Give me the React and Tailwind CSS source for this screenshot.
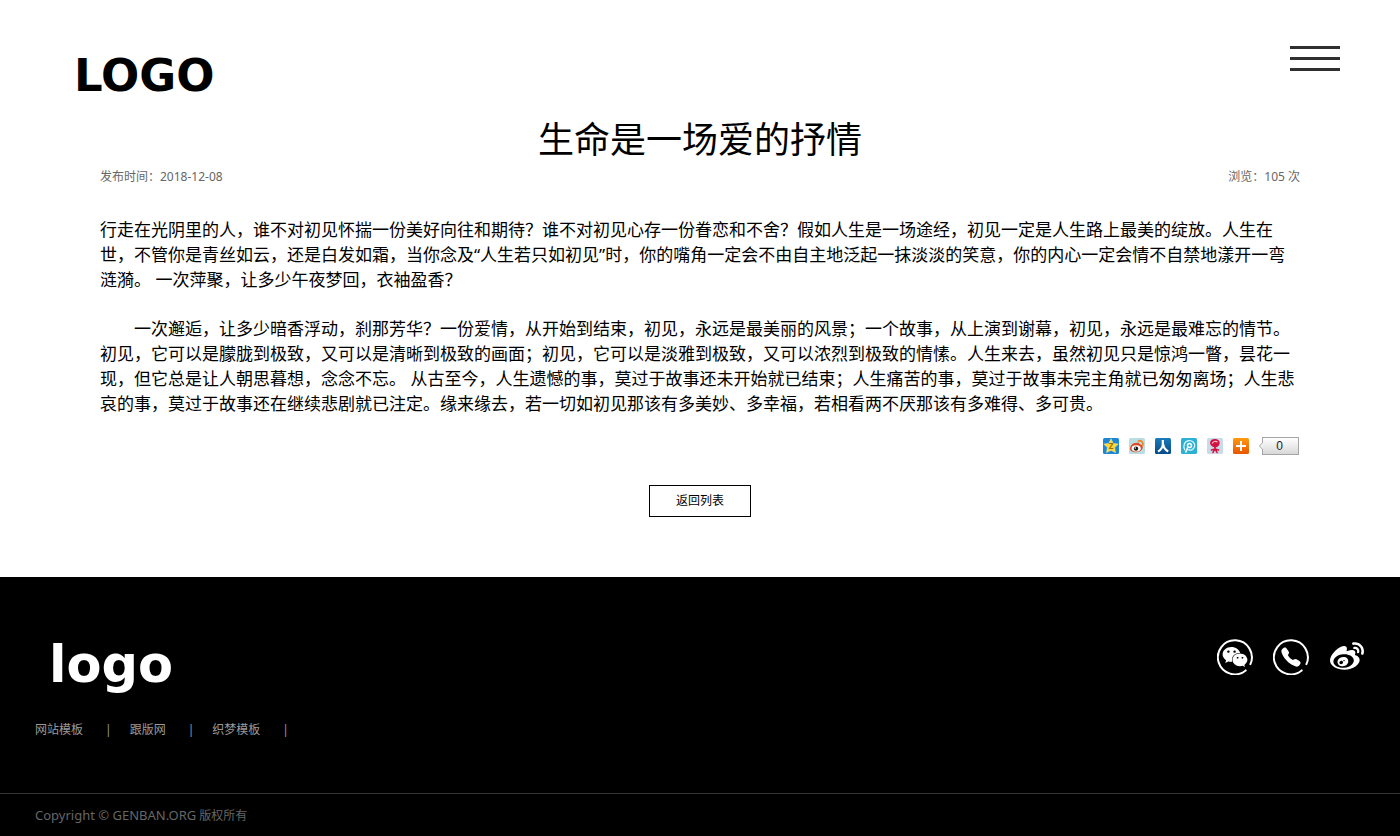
import { FaWeibo, FaWeixin } from 'react-icons/fa';
import { IoCall } from 'react-icons/io5';

const paragraphs = [
  '行走在光阴里的人，谁不对初见怀揣一份美好向往和期待？谁不对初见心存一份眷恋和不舍？假如人生是一场途经，初见一定是人生路上最美的绽放。人生在世，不管你是青丝如云，还是白发如霜，当你念及“人生若只如初见”时，你的嘴角一定会不由自主地泛起一抹淡淡的笑意，你的内心一定会情不自禁地漾开一弯涟漪。 一次萍聚，让多少午夜梦回，衣袖盈香？',
  '一次邂逅，让多少暗香浮动，刹那芳华？一份爱情，从开始到结束，初见，永远是最美丽的风景；一个故事，从上演到谢幕，初见，永远是最难忘的情节。初见，它可以是朦胧到极致，又可以是清晰到极致的画面；初见，它可以是淡雅到极致，又可以浓烈到极致的情愫。人生来去，虽然初见只是惊鸿一瞥，昙花一现，但它总是让人朝思暮想，念念不忘。 从古至今，人生遗憾的事，莫过于故事还未开始就已结束；人生痛苦的事，莫过于故事未完主角就已匆匆离场；人生悲哀的事，莫过于故事还在继续悲剧就已注定。缘来缘去，若一切如初见那该有多美妙、多幸福，若相看两不厌那该有多难得、多可贵。',
];

const footerLinks = ['网站模板', '跟版网', '织梦模板'];

function QzoneIcon() {
  return (
    <svg viewBox="0 0 16 16" className="size-4">
      <rect width="16" height="16" rx="1.5" fill="#1d87d6" />
      <path d="M8 .8l2.2 4.6 5 .7-3.6 3.5.9 5L8 12.3l-4.5 2.3.9-5L.8 6.1l5-.7z" fill="#fdd835" stroke="#fff2a0" strokeWidth=".5" />
      <text x="8" y="11" textAnchor="middle" fontSize="8" fontWeight="700" fill="#9a6b13">Z</text>
    </svg>
  );
}

function SinaIcon() {
  return (
    <svg viewBox="0 0 16 16" className="size-4">
      <rect width="16" height="16" rx="1.5" fill="#b9dde3" />
      <path d="M1 10.5C1.3 7 5 4 7 5.200c1-.5 3.500-.8 3.600.8 2.500.6 3.600 2.200 3 4.200C12.800 13 9.500 14.500 6.500 14.300 3 14 .9 12.700 1 10.500z" fill="#dc4a25" />
      <ellipse cx="7.2" cy="10.4" rx="4.6" ry="3.1" fill="#fff" />
      <circle cx="7" cy="10.6" r="2.2" fill="#161616" />
      <circle cx="6.3" cy="10" r=".7" fill="#fff" />
      <path d="M9.500 3c2.600-.9 5 1.200 4.400 4" fill="none" stroke="#f0862b" strokeWidth="1.8" strokeLinecap="round" />
    </svg>
  );
}

function RenrenIcon() {
  return (
    <svg viewBox="0 0 16 16" className="size-4">
      <defs>
        <linearGradient id="renren" x2="0" y2="1">
          <stop stopColor="#1b7bbb" />
          <stop offset="1" stopColor="#044a86" />
        </linearGradient>
      </defs>
      <rect width="16" height="16" rx="1.5" fill="url(#renren)" />
      <path d="M7.8 2v4.500C7.500 9.500 5.800 12 3 13.600M8.200 6.500c.5 3 2.200 5.500 5 7" fill="none" stroke="#fff" strokeWidth="2.2" />
    </svg>
  );
}

function PengyouIcon() {
  return (
    <svg viewBox="0 0 16 16" className="size-4">
      <rect width="16" height="16" rx="1.5" fill="#2bb2d3" />
      <path d="M3.800 12.200C1.500 8 3.500 2.800 8.300 2.700c3.500 0 5.600 2.300 5.400 5.200-.3 3.500-3.800 5-6.400 3.700" fill="none" stroke="#d8f6fc" strokeWidth="1.3" />
      <path d="M4.500 14.500c1.200-2 1.700-3.300 2.200-5" fill="none" stroke="#fff" strokeWidth="1.6" />
      <circle cx="8.500" cy="7.400" r="2" fill="none" stroke="#fff" strokeWidth="1.5" />
    </svg>
  );
}

function KaixinIcon() {
  return (
    <svg viewBox="0 0 16 16" className="size-4">
      <rect width="16" height="16" rx="1.5" fill="#c9dbe8" />
      <path d="M3 4.500C3.500 1.200 7 .4 9.800 1.200c3 .9 3.600 4 2 6.300-1.500 2.200-4.800 2.500-6.800.8C3.800 7.300 2.900 6 3 4.500z" fill="#d5123f" />
      <path d="M5.200 5.500c1-2 3.500-2.700 5.300-1.500" fill="none" stroke="#f7c3cf" strokeWidth="1.1" />
      <path d="M8 9v3M8 11l-3.500 1M8 11l3.500 1M7.500 11.500L6 14.500M8.500 11.500l1.500 3" fill="none" stroke="#d5123f" strokeWidth="1.6" strokeLinecap="round" />
    </svg>
  );
}

function MoreIcon() {
  return (
    <svg viewBox="0 0 16 16" className="size-4">
      <defs>
        <linearGradient id="more" x2="0" y2="1">
          <stop stopColor="#ff9a10" />
          <stop offset="1" stopColor="#ea5500" />
        </linearGradient>
      </defs>
      <rect width="16" height="16" rx="1.5" fill="url(#more)" />
      <path d="M8 3v10M3 8h10" stroke="#fff" strokeWidth="2" />
    </svg>
  );
}

const shares = [
  { name: 'QQ空间', Icon: QzoneIcon },
  { name: '新浪微博', Icon: SinaIcon },
  { name: '人人网', Icon: RenrenIcon },
  { name: '朋友网', Icon: PengyouIcon },
  { name: '开心网', Icon: KaixinIcon },
  { name: '更多', Icon: MoreIcon },
];

// ring with a small opening at the lower right
function Ring({ children }) {
  return (
    <span className="relative flex size-9 items-center justify-center">
      <svg viewBox="0 0 36 36" className="absolute inset-0 size-9">
        <path d="M28.700 31.400A17 17 0 1 1 33.400 25.200" fill="none" stroke="currentColor" strokeWidth="2" strokeLinecap="round" />
      </svg>
      {children}
    </span>
  );
}

function Header() {
  return (
    <header className="flex h-[120px] items-start justify-between pr-[60px] pl-[74px]">
      <a href="#" className="mt-[52px] font-['DejaVu_Sans'] text-[45px] leading-[48px] font-bold">LOGO</a>
      <button type="button" aria-label="菜单" className="mt-[46px] flex w-[50px] flex-col gap-2">
        <span className="h-[3px] bg-[#2f2f2f]" />
        <span className="h-[3px] bg-[#2f2f2f]" />
        <span className="h-[3px] bg-[#2f2f2f]" />
      </button>
    </header>
  );
}

function ShareBar() {
  return (
    <div className="mt-5 flex h-5 items-center justify-end">
      <div className="flex gap-[10px]">
        {shares.map(({ name, Icon }) => (
          <a key={name} href="#" aria-label={name}>
            <Icon />
          </a>
        ))}
      </div>
      <a
        href="#"
        className="relative mr-px ml-[13px] flex h-[18px] w-[37px] items-center justify-center border border-[#a5a5a5] bg-linear-to-b from-white to-[#d8d8d8] pr-0.5 font-['Liberation_Sans'] text-xs text-[#222]"
      >
        <svg viewBox="0 0 4 8" className="absolute top-1 -left-1 h-2 w-1">
          <path d="M4 0L.5 4 4 8" fill="#f2f2f2" stroke="#a5a5a5" />
        </svg>
        0
      </a>
    </div>
  );
}

function Footer() {
  return (
    <footer className="bg-black">
      <div className="flex h-[216px] items-start justify-between px-[35px]">
        <div>
          <a href="#" className="mt-[60px] ml-[14px] block font-['DejaVu_Sans'] text-[51px] leading-[56px] font-bold text-white">logo</a>
          <ul className="mt-[27px] flex text-xs leading-5 text-[#999]">
            {footerLinks.map((name) => (
              <li key={name} className="flex">
                <a href="#">{name}</a>
                <span className="mr-[18px] ml-[22px]">|</span>
              </li>
            ))}
          </ul>
        </div>
        <div className="mt-[62px] flex gap-5 text-white">
          <a href="#" aria-label="微信">
            <Ring><FaWeixin className="size-[26px]" /></Ring>
          </a>
          <a href="#" aria-label="电话">
            <Ring><IoCall className="size-[22px]" /></Ring>
          </a>
          <a href="#" aria-label="微博" className="flex size-9 items-center justify-center">
            <FaWeibo className="size-[34px]" />
          </a>
        </div>
      </div>
      <p className="border-t border-[#333] px-[35px] py-[11px] text-xs leading-5 text-[#666]">
        <span className="text-[13px]">Copyright © GENBAN.ORG</span> 版权所有
      </p>
    </footer>
  );
}

export default function App() {
  return (
    <div className="flex min-h-screen flex-col bg-black font-['Noto_Sans','Noto_Sans_CJK_SC',sans-serif] text-black">
      <div className="bg-white">
        <Header />
        <main className="mx-auto max-w-[1200px] pb-[60px]">
          <h1 className="text-center text-4xl leading-10">生命是一场爱的抒情</h1>
          <div className="mt-[7px] flex justify-between text-xs leading-5 text-[#666]">
            <span>发布时间：2018-12-08</span>
            <span>浏览：105 次</span>
          </div>
          <article className="mt-[30px] text-[17px] leading-[25px]">
            <p>{paragraphs[0]}</p>
            <p className="mt-6 indent-[34px]">{paragraphs[1]}</p>
          </article>
          <ShareBar />
          <a href="#" className="mx-auto mt-[29px] flex h-8 w-[102px] items-center justify-center border border-black text-xs">
            返回列表
          </a>
        </main>
      </div>
      <Footer />
    </div>
  );
}
